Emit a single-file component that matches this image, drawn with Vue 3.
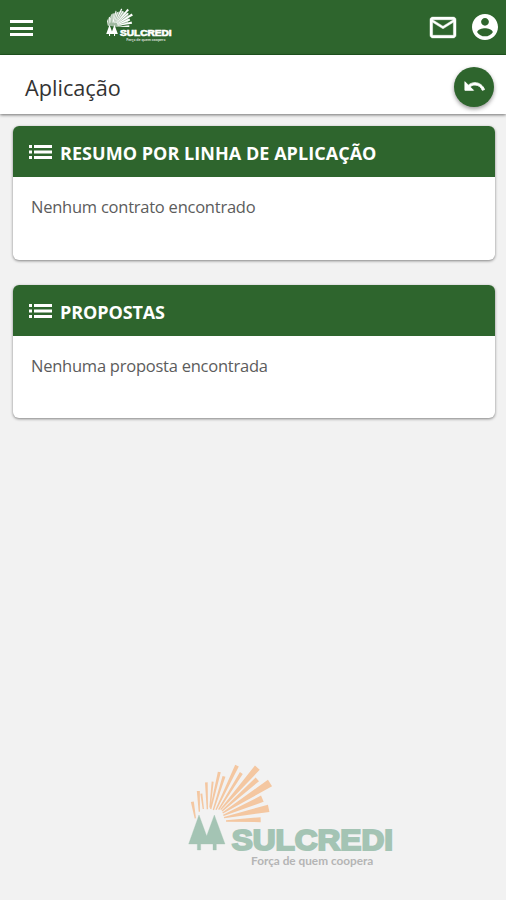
<script setup>
import { h } from 'vue'

const rays = [
  [46, 190, 37, 140, 9], [58, 170, 55, 108, 9], [82, 163, 79, 82, 8],
  [92, 162, 118, 51, 9], [100, 165, 132, 64, 9], [108, 164, 171, 32, 12],
  [116, 164, 184, 54, 10], [122, 164, 232, 38, 19], [126, 168, 232, 73, 15],
  [128, 174, 270, 84, 23], [130, 181, 247, 131, 20], [132, 188, 266, 160, 22],
  [138, 198, 242, 194, 15], [70, 162, 64, 116, 6], [90, 158, 98, 80, 6]
].map(([x1, y1, x2, y2, w]) => {
  const length = Math.hypot(x2 - x1, y2 - y1)
  const nx = -(y2 - y1) / length
  const ny = (x2 - x1) / length
  const a = w / 2
  return `M${x1 + nx * 2},${y1 + ny * 2} L${x2 + nx * a},${y2 + ny * a} L${x2 - nx * a},${y2 - ny * a} L${x1 - nx * 2},${y1 - ny * 2}Z`
}).join(' ')

const Logo = () => h('svg', { viewBox: '24 24 618 318', 'aria-label': 'Sulcredi' }, [
  h('path', { class: 'halo', d: 'M38 188 40 130 85 75 175 50 235 85 232 165 132 202Z' }),
  h('path', { class: 'rays', d: rays }),
  h('path', { class: 'trees', d: 'M57 180 80 243 103 180 135 267H109V285H99V267H62V285H52V267H26Z' }),
  h('text', { class: 'brand', x: 155, y: 285, textLength: 484, lengthAdjust: 'spacingAndGlyphs' }, 'SULCREDI'),
  h('text', { class: 'tagline', x: 213, y: 330, textLength: 367, lengthAdjust: 'spacingAndGlyphs' }, 'Força de quem coopera')
])

const sections = [
  { title: 'RESUMO POR LINHA DE APLICAÇÃO', message: 'Nenhum contrato encontrado', name: 'summary' },
  { title: 'PROPOSTAS', message: 'Nenhuma proposta encontrada', name: 'proposals' }
]
</script>

<template>
  <div class="page">
    <header class="topbar">
      <button class="menu" aria-label="Menu">
        <svg viewBox="0 0 24 18"><path d="M0 0H23V3H0ZM0 7H23V10H0ZM0 13H23V16H0Z" /></svg>
      </button>
      <Logo class="logo header-logo" />
      <nav class="actions">
        <svg class="mail" viewBox="2 4 20 16"><path d="M22 6c0-1.1-.9-2-2-2H4c-1.1 0-2 .9-2 2v12c0 1.1.9 2 2 2h16c1.1 0 2-.9 2-2V6zm-2 0-8 5-8-5h16zm0 12H4V8l8 5 8-5v10z" /></svg>
        <svg class="user" viewBox="2 2 20 20"><path d="M12 2C6.48 2 2 6.48 2 12s4.48 10 10 10 10-4.48 10-10S17.52 2 12 2zm0 3c1.66 0 3 1.34 3 3s-1.34 3-3 3-3-1.34-3-3 1.34-3 3-3zm0 14.2c-2.5 0-4.71-1.28-6-3.22.03-1.99 4-3.08 6-3.08 1.99 0 5.97 1.09 6 3.08-1.29 1.94-3.5 3.22-6 3.22z" /></svg>
      </nav>
    </header>
    <div class="titlebar">
      <h1>Aplicação</h1>
      <button class="back" aria-label="Voltar">
        <svg viewBox="0 0 24 24"><path d="M12.5 8c-2.65 0-5.05.99-6.9 2.6L2 7v9h9l-3.62-3.62c1.39-1.16 3.16-1.88 5.12-1.88 3.54 0 6.55 2.31 7.6 5.5l2.37-.78C21.08 11.03 17.15 8 12.5 8z" /></svg>
      </button>
    </div>
    <main>
      <section v-for="section in sections" :key="section.name" class="card" :class="section.name">
        <h2>
          <svg class="list" viewBox="0 0 23 14"><path d="M0 0H3V3H0ZM5 0H23V3H5ZM0 5.5H3V8.5H0ZM5 5.5H23V8.5H5ZM0 11H3V14H0ZM5 11H23V14H5Z" /></svg>
          <span>{{ section.title }}</span>
        </h2>
        <p>{{ section.message }}</p>
      </section>
    </main>
    <footer><Logo class="logo watermark" /></footer>
  </div>
</template>

<style>
body { margin: 0; background: #f2f2f2; }
</style>

<style scoped>
.page { height: 900px; display: flex; flex-direction: column; overflow: hidden; background: #f2f2f2; font-family: "Open Sans", "Noto Sans", sans-serif; }
.topbar { height: 55px; flex: none; box-sizing: border-box; display: flex; align-items: center; padding: 0 8px 0 10px; background: #2e652d; border-bottom: 1px solid #205720; }
button { border: 0; padding: 0; }
.menu { width: 24px; height: 18px; background: none; margin-top: 3px; }
svg { display: block; fill: #fff; }
.menu svg { width: 24px; height: 18px; }
.header-logo { width: 66px; height: 34px; margin: -4px 0 0 72px; }
.actions { display: flex; align-items: center; gap: 16px; margin-left: auto; }
.mail { width: 26px; height: 21px; margin-left: -1px; stroke: #fff; stroke-width: .35px; overflow: visible; }
.user { width: 26px; height: 26px; }
.titlebar { height: 59px; flex: none; box-sizing: border-box; display: flex; align-items: center; justify-content: space-between; padding: 4px 12px 0 25px; background: #fff; box-shadow: 0 1px 3px #0008; }
h1 { margin: 2px 0 0; font-size: 21.7px; font-weight: 400; line-height: 30px; color: #333; }
.back { width: 40px; height: 40px; border-radius: 50%; display: grid; place-items: center; background: #2e652d; box-shadow: 0 2px 4px #0006; }
.back svg { width: 23px; height: 23px; stroke: #fff; stroke-width: .9px; }
main { display: flex; flex-direction: column; gap: 25px; padding: 12px 11px 0 13px; }
.card { height: 133.5px; border-radius: 6px; overflow: hidden; background: #fff; box-shadow: 0 1px 3px #0007; }
h2 { height: 51px; box-sizing: border-box; margin: 0; padding: 4px 16px 0; display: flex; align-items: center; gap: 8px; background: #2e652d; color: #fff; font-size: 18px; line-height: 25px; font-weight: 700; white-space: nowrap; }
.list { width: 23px; height: 14px; margin-top: -2px; }
.summary h2 { height: 50.5px; }
.summary h2 span { letter-spacing: .04px; }
.proposals h2 span { letter-spacing: -.1px; }
p { margin: 17px 18px 0; color: #5c5c5c; font-size: 16.5px; line-height: 26px; font-weight: 400; letter-spacing: -.24px; }
footer { margin-top: auto; padding: 0 0 31px 188px; }
.watermark { width: 206px; height: 106px; }
.logo :deep(.brand) { font: 700 86px "Liberation Sans", sans-serif; stroke-width: 6px; }
.logo :deep(.tagline) { font: 700 32px Lato, sans-serif; }
.header-logo :deep(.brand) { stroke: #fff; }
.header-logo :deep(.halo) { fill: #fff; opacity: .55; }
.header-logo :deep(.tagline) { opacity: .8; }
.watermark :deep(.halo) { fill: none; }
.watermark :deep(.rays) { fill: #f4c7a1; }
.watermark :deep(.trees), .watermark :deep(.brand) { fill: #a4c4b4; stroke: #a4c4b4; }
.watermark :deep(.tagline) { fill: #b5b5b5; }
</style>
